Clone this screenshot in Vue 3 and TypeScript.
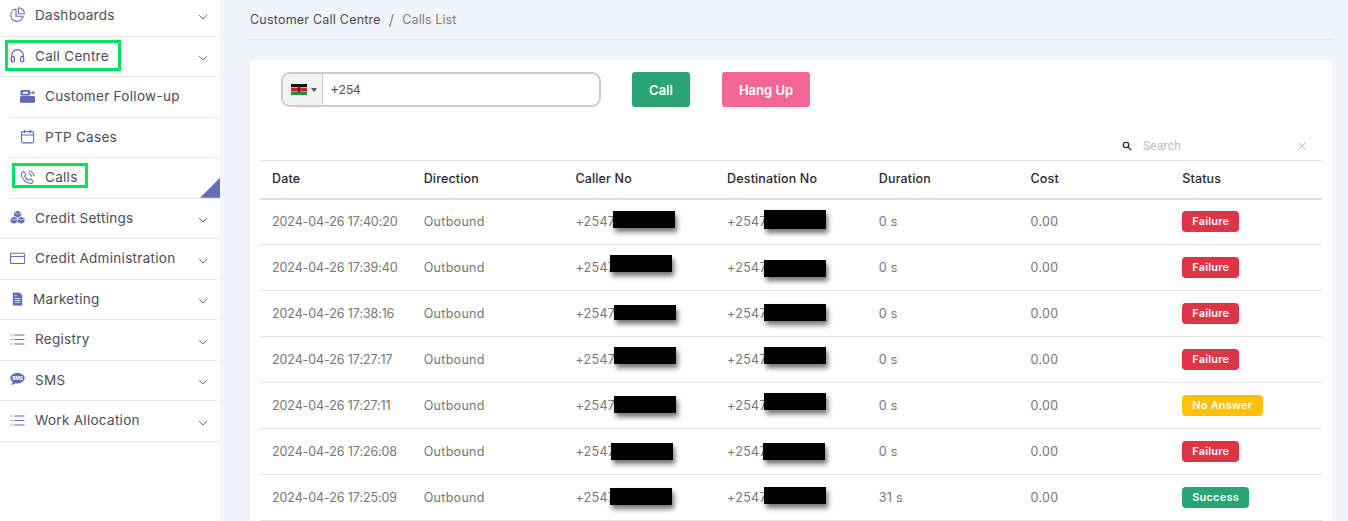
<script setup lang="ts">
interface Redaction {
  left: number;
  top: number;
  width: number;
  height: number;
}

interface CallRow {
  date: string;
  duration: string;
  status: 'Failure' | 'No Answer' | 'Success';
  caller: Redaction;
  dest: Redaction;
}

const navTop = [
  { label: 'Dashboards', icon: 'pie' },
  { label: 'Call Centre', icon: 'headset' },
];

const navSub = [
  { label: 'Customer Follow-up', icon: 'follow' },
  { label: 'PTP Cases', icon: 'calendar' },
  { label: 'Calls', icon: 'phone' },
];

const navBottom = [
  { label: 'Credit Settings', icon: 'cubes' },
  { label: 'Credit Administration', icon: 'card' },
  { label: 'Marketing', icon: 'doc' },
  { label: 'Registry', icon: 'list' },
  { label: 'SMS', icon: 'sms' },
  { label: 'Work Allocation', icon: 'list' },
];

const columns = ['Date', 'Direction', 'Caller No', 'Destination No', 'Duration', 'Cost', 'Status'];

const box = (left: number, top: number, height = 17): Redaction => ({ left, top, width: 62, height });

const rows: CallRow[] = [
  { date: '2024-04-26 17:40:20', duration: '0 s', status: 'Failure', caller: box(50, 11), dest: box(49, 10, 19) },
  { date: '2024-04-26 17:39:40', duration: '0 s', status: 'Failure', caller: box(47, 10), dest: box(49, 15) },
  { date: '2024-04-26 17:38:16', duration: '0 s', status: 'Failure', caller: box(51, 14, 15), dest: box(49, 13) },
  { date: '2024-04-26 17:27:17', duration: '0 s', status: 'Failure', caller: box(51, 10), dest: box(49, 10) },
  { date: '2024-04-26 17:27:11', duration: '0 s', status: 'No Answer', caller: box(51, 13), dest: box(49, 10) },
  { date: '2024-04-26 17:26:08', duration: '0 s', status: 'Failure', caller: box(48, 14), dest: box(48, 14) },
  { date: '2024-04-26 17:25:09', duration: '31 s', status: 'Success', caller: box(47, 13), dest: box(49, 12) },
];

const statusClass = (s: CallRow['status']) =>
  s === 'Failure' ? 'badgeFailure' : s === 'Success' ? 'badgeSuccess' : 'badgeWarn';

const boxStyle = (b: Redaction) => ({
  left: `${b.left}px`,
  top: `${b.top}px`,
  width: `${b.width}px`,
  height: `${b.height}px`,
});
</script>

<template>
  <div class="page">
    <aside class="sidebar">
      <div v-for="(item, i) in navTop" :key="item.label" class="navItem" :class="{ navFirst: i === 0 }">
        <svg class="navIcon" viewBox="0 0 16 16" fill="none" stroke="currentColor" stroke-width="1.2">
          <template v-if="item.icon === 'pie'">
            <path d="M6.4 2.2A6.6 6.6 0 1 0 14 9.8H6.4Z" />
            <path d="M9 .8v6.4h6.4A6.4 6.4 0 0 0 9 .8Z" />
          </template>
          <template v-else>
            <path d="M1.8 10V8a6.2 6.2 0 0 1 12.4 0v2" stroke-width="1.4" />
            <rect x="1.4" y="9" width="3.2" height="5.8" rx="1.5" stroke-width="1.4" />
            <rect x="11.4" y="9" width="3.2" height="5.8" rx="1.5" stroke-width="1.4" />
          </template>
        </svg>
        <span class="navLabel">{{ item.label }}</span>
        <svg class="chev" viewBox="0 0 10 6" fill="none" stroke="currentColor" stroke-width="1">
          <path d="M1 1l4 4 4-4" />
        </svg>
      </div>

      <div v-for="item in navSub" :key="item.label" class="subItem">
        <svg class="navIcon" viewBox="0 0 16 16" fill="none" stroke="currentColor" stroke-width="1.1">
          <template v-if="item.icon === 'follow'">
            <path d="M1 2.5A1 1 0 0 1 2 1.5h7.5a1 1 0 0 1 1 1v3a1 1 0 0 1-1 1H2a1 1 0 0 1-1-1Z" fill="currentColor" />
            <rect x="3" y="3" width="5.5" height="2" fill="#fff" stroke="none" />
            <path d="M11 4h4M13.5 2.5L15 4l-1.5 1.5" stroke-width="1.3" />
            <rect x=".5" y="8" width="15" height="6" rx="1" fill="currentColor" />
          </template>
          <template v-else-if="item.icon === 'calendar'">
            <rect x="1.5" y="2.8" width="13" height="12" rx="1.4" />
            <path d="M1.5 6.4h13M4.8 .8v3.2M11.2 .8v3.2" />
          </template>
          <template v-else>
            <path d="M4 1.5l2.2 3.4-1.3 1.5c.8 1.9 2.4 3.5 4.4 4.5l1.6-1.2 3.2 2.1-1.2 2c-.5.6-1.3.8-2 .6C6 13.2 2.6 9.8 1.4 5.4c-.2-.8 0-1.5.5-2Z" />
            <path d="M9.2 1a5.8 5.8 0 0 1 5.8 5.8M9.2 3.8A3 3 0 0 1 12.2 6.8" />
          </template>
        </svg>
        <span class="navLabel">{{ item.label }}</span>
        <i v-if="item.icon === 'phone'" class="activeCorner"></i>
      </div>

      <div
        v-for="item in navBottom"
        :key="item.label"
        class="navItem"
        :class="{ navTight: item.icon === 'doc' }"
      >
        <svg class="navIcon" viewBox="0 0 16 16" fill="none" stroke="currentColor" stroke-width="1.1">
          <template v-if="item.icon === 'cubes'">
            <g fill="currentColor" stroke="#fff" stroke-width=".7">
              <path d="M8 .4l4 2v4.2l-4 2-4-2V2.400Z" />
              <path d="M4.2 6.800l4 2V13l-4 2-4-2V8.800Z" />
              <path d="M11.8 6.800l4 2V13l-4 2-4-2V8.800Z" />
              <path d="M4.5 2.800L8 4.500l3.500-1.700M.7 9.200l3.500 1.700 3.500-1.700M8.300 9.200l3.500 1.700 3.500-1.700" fill="none" />
            </g>
          </template>
          <template v-else-if="item.icon === 'card'">
            <rect x=".6" y="2.4" width="14.8" height="11" rx="1" />
            <path d="M.6 5.8h14.8" />
          </template>
          <template v-else-if="item.icon === 'doc'">
            <path d="M3 1.5h7l3 3v11H3Z" fill="currentColor" stroke="none" />
            <path d="M5 8h6M5 10h6M5 12h6M5 5h2.5" stroke="#fff" stroke-width=".8" />
          </template>
          <template v-else-if="item.icon === 'list'">
            <path d="M4.5 3.2h11M4.5 8h11M4.5 12.800h11" />
            <path d="M.6 3.2h2.2M.6 8h2.2M.6 12.800h2.2" stroke-width="1.2" stroke-dasharray="1 .6" />
          </template>
          <template v-else>
            <path d="M8 1C3.800 1 .4 3.300.4 6.500c0 1.700.9 3.100 2.400 4.100-.1 1.100-.8 2.300-1.600 3.200 1.900-.1 3.400-.8 4.500-1.800.7.100 1.500.2 2.300.2 4.200 0 7.600-2.500 7.600-5.700S12.200 1 8 1Z" fill="currentColor" stroke="none" />
            <text x="8" y="8.4" text-anchor="middle" fill="#fff" stroke="none" class="smsText">SMS</text>
          </template>
        </svg>
        <span class="navLabel">{{ item.label }}</span>
        <svg class="chev" viewBox="0 0 10 6" fill="none" stroke="currentColor" stroke-width="1">
          <path d="M1 1l4 4 4-4" />
        </svg>
      </div>

      <i class="marker markerCentre"></i>
      <i class="marker markerCalls"></i>
    </aside>

    <main class="main">
      <div class="crumbs">
        <span class="crumbRoot">Customer Call Centre</span>
        <span class="crumbSep">/</span>
        <span class="crumbLeaf">Calls List</span>
      </div>

      <section class="card">
        <div class="dialer">
          <div class="phoneInput">
            <div class="flagBox">
              <svg class="flag" viewBox="0 0 16 11">
                <rect width="16" height="11" fill="#111" />
                <rect y="3.3" width="16" height="4.4" fill="#fff" />
                <rect y="3.9" width="16" height="3.2" fill="#c8252c" />
                <rect y="7.7" width="16" height="3.3" fill="#2e8b3a" />
                <ellipse cx="8" cy="5.5" rx="1.5" ry="3" fill="#7b2323" />
              </svg>
              <i class="flagCaret"></i>
            </div>
            <span class="phoneValue">+254</span>
          </div>
          <button type="button" class="btn btnCall">Call</button>
          <button type="button" class="btn btnHang">Hang Up</button>
        </div>

        <div class="searchRow">
          <svg class="searchIcon" viewBox="0 0 12 12" fill="none" stroke="#222" stroke-width="1.4">
            <circle cx="4.8" cy="4.8" r="3.3" />
            <path d="M7.3 7.3L11 11" />
          </svg>
          <span class="searchText">Search</span>
          <svg class="searchClear" viewBox="0 0 10 10" fill="none" stroke="#c4c4c4" stroke-width="1">
            <path d="M1 1l8 8M9 1l-8 8" />
          </svg>
        </div>

        <table class="calls">
          <thead>
            <tr>
              <th v-for="c in columns" :key="c">{{ c }}</th>
            </tr>
          </thead>
          <tbody>
            <tr v-for="row in rows" :key="row.date">
              <td class="dateCell">{{ row.date }}</td>
              <td>Outbound</td>
              <td class="numCell">+2547<i class="redact" :style="boxStyle(row.caller)"></i></td>
              <td class="numCell">+2547<i class="redact" :style="boxStyle(row.dest)"></i></td>
              <td>{{ row.duration }}</td>
              <td>0.00</td>
              <td><span class="badge" :class="statusClass(row.status)">{{ row.status }}</span></td>
            </tr>
          </tbody>
        </table>
      </section>
    </main>
  </div>
</template>

<style>
html,
body {
  margin: 0;
  height: 521px;
  overflow: hidden;
}
</style>

<style scoped>
.page {
  display: flex;
  width: 1348px;
  height: 521px;
  overflow: hidden;
  background: #f1f4f8;
  font-family: Inter, "Noto Sans", sans-serif;
  color: #4c4c5c;
}

.sidebar {
  position: relative;
  flex: 0 0 220px;
  background: #fff;
}

.navItem,
.subItem {
  position: relative;
  display: flex;
  align-items: center;
  box-sizing: border-box;
  height: 40.5px;
  font-size: 13.5px;
  letter-spacing: 0.3px;
  border-bottom: 1px solid #e7e9ed;
}

.navItem {
  padding: 0 12.5px 0 10px;
}

.navFirst {
  height: 36.8px;
  padding-bottom: 4px;
}

.subItem {
  margin-left: 10px;
  padding-left: 10px;
}

.navIcon {
  flex: none;
  width: 15px;
  height: 15px;
  margin-right: 10px;
  color: #5f6dbb;
  position: relative;
  top: -1px;
}

.navTight .navIcon {
  margin-right: 8px;
}

.navLabel {
  flex: 1;
  white-space: nowrap;
  position: relative;
  top: -1px;
}

.chev {
  flex: none;
  width: 10px;
  height: 6px;
  margin-top: 3px;
  color: #5f6dbb;
}

.smsText {
  font-size: 5px;
  font-weight: 800;
  letter-spacing: 0;
}

.activeCorner {
  position: absolute;
  right: 0;
  bottom: 0;
  width: 20px;
  height: 20px;
  background: #6270b5;
  clip-path: polygon(100% 0, 100% 100%, 0 100%);
}

.marker {
  position: absolute;
  box-sizing: border-box;
  border: 3px solid #00e35f;
}

.markerCentre {
  left: 5px;
  top: 40px;
  width: 116px;
  height: 31px;
}

.markerCalls {
  left: 12px;
  top: 163px;
  width: 76px;
  height: 25px;
}

.main {
  flex: 1;
  min-width: 0;
  padding: 0 16px 0 30px;
}

.crumbs {
  display: flex;
  align-items: center;
  box-sizing: border-box;
  height: 40px;
  margin-bottom: 20px;
  border-bottom: 1px solid #e6e9ee;
  font-size: 12.5px;
  letter-spacing: 0.22px;
}

.crumbRoot {
  color: #4a4a58;
}

.crumbSep {
  margin: 0 8px;
  color: #666;
  font-size: 15px;
  font-weight: 300;
}

.crumbLeaf {
  color: #7a7d88;
  letter-spacing: 0.1px;
}

.card {
  box-sizing: border-box;
  height: 480px;
  padding: 12px 10px 0;
  background: #fff;
  border-radius: 5px 5px 0 0;
}

.dialer {
  display: flex;
  align-items: center;
  height: 35px;
  padding-left: 21px;
}

.phoneInput {
  display: flex;
  box-sizing: border-box;
  width: 320px;
  height: 35px;
  margin-right: 31px;
  border: 2px solid #ccc;
  border-radius: 9px;
  overflow: hidden;
}

.flagBox {
  display: flex;
  align-items: center;
  box-sizing: border-box;
  width: 40px;
  padding-left: 8px;
  background: #f3f3f3;
  border-right: 1px solid #ccc;
}

.flag {
  width: 16px;
  height: 11px;
}

.flagCaret {
  margin-left: 4px;
  border-top: 4px solid #555;
  border-left: 3px solid transparent;
  border-right: 3px solid transparent;
}

.phoneValue {
  align-self: center;
  margin-left: 8px;
  font-family: Roboto, sans-serif;
  font-size: 13px;
  color: #555;
}

.btn {
  height: 35px;
  padding: 0;
  border: 0;
  border-radius: 3px;
  color: #fff;
  font-family: inherit;
  font-size: 13px;
  font-weight: 600;
}

.btnCall {
  width: 58px;
  margin-right: 32px;
  background: #28a475;
}

.btnHang {
  width: 88px;
  background: #f46696;
}

.searchRow {
  display: flex;
  align-items: center;
  justify-content: flex-end;
  box-sizing: border-box;
  height: 53px;
  padding: 24px 15px 0 0;
}

.searchIcon {
  width: 10px;
  height: 10px;
  margin-right: 11px;
}

.searchText {
  width: 154px;
  font-family: Roboto, sans-serif;
  font-size: 12px;
  color: #bdbdbd;
  letter-spacing: 0.2px;
}

.searchClear {
  width: 10px;
  height: 10px;
}

.calls {
  width: 100%;
  border-collapse: collapse;
  table-layout: fixed;
  border-top: 1px solid #e1e3e7;
}

.calls th {
  box-sizing: border-box;
  height: 38px;
  padding: 0 12px 2px;
  border-bottom: 2px solid #dee2e6;
  text-align: left;
  font-size: 12.5px;
  font-weight: 500;
  color: #2a2a2a;
  letter-spacing: 0.15px;
}

.calls td {
  box-sizing: border-box;
  height: 46px;
  padding: 0 12px;
  border-bottom: 1px solid #e1e3e7;
  font-size: 12.5px;
  color: #777;
  white-space: nowrap;
  letter-spacing: 0.3px;
}

.calls .dateCell {
  letter-spacing: -0.1px;
}

.numCell {
  position: relative;
}

.redact {
  position: absolute;
  background: #000;
  box-shadow: 2px 4px 5px rgba(0, 0, 0, 0.55);
}

.badge {
  display: inline-block;
  height: 21px;
  padding: 0 10px;
  line-height: 20px;
  border-radius: 4px;
  color: #fff;
  font-size: 11px;
  font-weight: 600;
  vertical-align: middle;
  letter-spacing: 0.2px;
}

.badgeFailure {
  background: #dc3545;
}

.badgeWarn {
  background: #ffc107;
}

.badgeSuccess {
  background: #28a475;
}
</style>
